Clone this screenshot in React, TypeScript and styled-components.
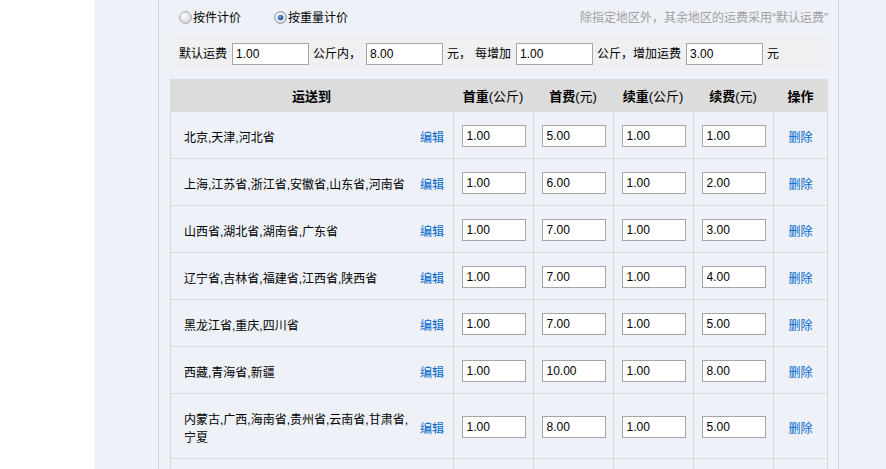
import React from "react";
import styled, { createGlobalStyle } from "styled-components";

const Global = createGlobalStyle`
  html, body { margin: 0; padding: 0; background: #ffffff; }
  body {
    font-family: "Liberation Sans", "Noto Sans CJK SC", sans-serif;
    font-size: 12px;
    color: #000;
  }
  * { box-sizing: border-box; }
`;

const Page = styled.div`
  display: flex;
  min-height: 469px;
`;

const Side = styled.div`
  width: 95px;
  flex: none;
  background: #ffffff;
`;

const Main = styled.div`
  flex: 1;
  display: flex;
  background: #eef1f8;
  padding-left: 63px;
`;

const Panel = styled.div`
  width: 681px;
  border-left: 1px solid #d2d5db;
  border-right: 1px solid #d2d5db;
  padding: 0 10px 0 11px;
  display: flex;
  flex-direction: column;
`;

const ModeRow = styled.div`
  height: 37px;
  display: flex;
  align-items: center;
  padding: 0 0 2px 9px;
  line-height: 16px;
`;

const ModeOption = styled.label<{ $gap?: number }>`
  display: flex;
  align-items: center;
  gap: 1px;
  margin-right: ${(p) => p.$gap ?? 0}px;
  cursor: pointer;
`;

const Hint = styled.div`
  margin-left: auto;
  color: #a0a0a0;
`;

const Bar = styled.div`
  height: 32px;
  background: #f0f0f2;
  display: flex;
  align-items: center;
  gap: 4px;
  padding: 1px 0 0 9px;
  line-height: 16px;
`;

const BarInput = styled.input`
  width: 77px;
  height: 22px;
  margin-left: 1px;
  border: 1px solid #a5a5a5;
  background: #fff;
  padding: 0 3px;
  font: 12px "Liberation Sans", sans-serif;
  color: #000;
  outline: none;
`;

const Table = styled.div`
  margin-top: 10px;
  width: 658px;
`;

const cols = "283px 80px 80px 80px 80px 55px";

const HeadRow = styled.div`
  display: grid;
  grid-template-columns: ${cols};
  height: 33px;
  background: #dcdcdc;
`;

const HeadCell = styled.div`
  display: flex;
  align-items: center;
  justify-content: center;
  padding-top: 2px;
  font-weight: bold;
  font-size: 13px;
  line-height: 16px;
`;

const Paren = styled.span`
  font-weight: normal;
`;

const BodyRow = styled.div`
  display: grid;
  grid-template-columns: ${cols};
  border-bottom: 1px solid #d8d8d8;
`;

const Cell = styled.div`
  display: flex;
  align-items: center;
  justify-content: center;
  padding-top: 2px;
  border-left: 1px solid #d8d8d8;
  &:last-child {
    border-right: 1px solid #d8d8d8;
  }
`;

const RegionCell = styled(Cell)`
  justify-content: flex-start;
  padding: 17px 9px 11px 13px;
  line-height: 18px;
`;

const RegionText = styled.div`
  max-width: 230px;
`;

const Link = styled.a`
  color: #0066cc;
  text-decoration: none;
  cursor: pointer;
  white-space: nowrap;
`;

const EditLink = styled(Link)`
  margin-left: auto;
`;

const RateInput = styled.input`
  width: 64px;
  height: 22px;
  border: 1px solid #a5a5a5;
  background: #fff;
  padding: 0 4px;
  font: 12px "Liberation Sans", sans-serif;
  color: #000;
  outline: none;
`;

function Radio({ checked }: { checked?: boolean }) {
  return (
    <svg width="13" height="13" viewBox="0 0 13 13">
      <defs>
        <radialGradient id={checked ? "rgOn" : "rgOff"} cx="0.35" cy="0.35" r="0.8">
          <stop offset="0" stopColor="#ffffff" />
          <stop offset="1" stopColor={checked ? "#d6dbe3" : "#cfcfcf"} />
        </radialGradient>
        <radialGradient id="dot" cx="0.4" cy="0.35" r="0.7">
          <stop offset="0" stopColor="#6fa6e8" />
          <stop offset="1" stopColor="#123f8c" />
        </radialGradient>
      </defs>
      <circle
        cx="6.5"
        cy="6.5"
        r="5.8"
        fill={`url(#${checked ? "rgOn" : "rgOff"})`}
        stroke={checked ? "#7a8797" : "#a3a3a3"}
        strokeWidth="1"
      />
      {checked && <circle cx="6.5" cy="6.5" r="2.8" fill="url(#dot)" />}
    </svg>
  );
}

type Rate = {
  region: string;
  firstW: string;
  firstFee: string;
  addW: string;
  addFee: string;
};

const rates: Rate[] = [
  { region: "北京,天津,河北省", firstW: "1.00", firstFee: "5.00", addW: "1.00", addFee: "1.00" },
  { region: "上海,江苏省,浙江省,安徽省,山东省,河南省", firstW: "1.00", firstFee: "6.00", addW: "1.00", addFee: "2.00" },
  { region: "山西省,湖北省,湖南省,广东省", firstW: "1.00", firstFee: "7.00", addW: "1.00", addFee: "3.00" },
  { region: "辽宁省,吉林省,福建省,江西省,陕西省", firstW: "1.00", firstFee: "7.00", addW: "1.00", addFee: "4.00" },
  { region: "黑龙江省,重庆,四川省", firstW: "1.00", firstFee: "7.00", addW: "1.00", addFee: "5.00" },
  { region: "西藏,青海省,新疆", firstW: "1.00", firstFee: "10.00", addW: "1.00", addFee: "8.00" },
  { region: "内蒙古,广西,海南省,贵州省,云南省,甘肃省,宁夏", firstW: "1.00", firstFee: "8.00", addW: "1.00", addFee: "5.00" },
  { region: "", firstW: "1.00", firstFee: "5.00", addW: "1.00", addFee: "1.00" },
];

export default function App() {
  return (
    <>
      <Global />
      <Page>
        <Side />
        <Main>
          <Panel>
            <ModeRow>
              <ModeOption $gap={33}>
                <Radio />
                <span>按件计价</span>
              </ModeOption>
              <ModeOption>
                <Radio checked />
                <span>按重量计价</span>
              </ModeOption>
              <Hint>除指定地区外，其余地区的运费采用“默认运费”</Hint>
            </ModeRow>
            <Bar>
              <span>默认运费</span>
              <BarInput defaultValue="1.00" />
              <span>公斤内，</span>
              <BarInput defaultValue="8.00" />
              <span>元，</span>
              <span>每增加</span>
              <BarInput defaultValue="1.00" />
              <span>公斤，增加运费</span>
              <BarInput defaultValue="3.00" />
              <span>元</span>
            </Bar>
            <Table>
              <HeadRow>
                <HeadCell>运送到</HeadCell>
                <HeadCell>
                  首重<Paren>(公斤)</Paren>
                </HeadCell>
                <HeadCell>
                  首费<Paren>(元)</Paren>
                </HeadCell>
                <HeadCell>
                  续重<Paren>(公斤)</Paren>
                </HeadCell>
                <HeadCell>
                  续费<Paren>(元)</Paren>
                </HeadCell>
                <HeadCell>操作</HeadCell>
              </HeadRow>
              {rates.map((r, i) => (
                <BodyRow key={i}>
                  <RegionCell>
                    <RegionText>{r.region}</RegionText>
                    <EditLink>编辑</EditLink>
                  </RegionCell>
                  <Cell>
                    <RateInput defaultValue={r.firstW} />
                  </Cell>
                  <Cell>
                    <RateInput defaultValue={r.firstFee} />
                  </Cell>
                  <Cell>
                    <RateInput defaultValue={r.addW} />
                  </Cell>
                  <Cell>
                    <RateInput defaultValue={r.addFee} />
                  </Cell>
                  <Cell>
                    <Link>删除</Link>
                  </Cell>
                </BodyRow>
              ))}
            </Table>
          </Panel>
        </Main>
      </Page>
    </>
  );
}
